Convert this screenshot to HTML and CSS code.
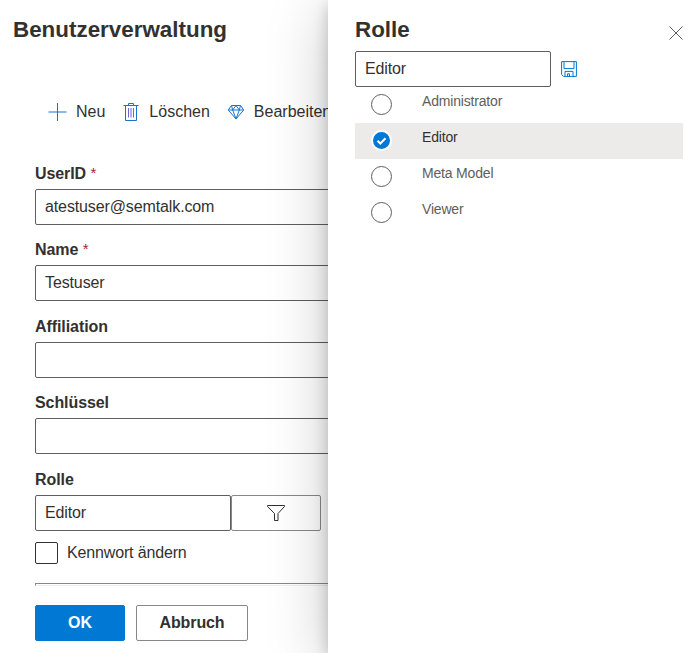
FILE: index.html
```html
<!DOCTYPE html>
<html lang="de">
<head>
<meta charset="utf-8">
<title>Benutzerverwaltung</title>
<link rel="stylesheet" href="styles.css">
</head>
<body>
<div class="app">
  <main class="page">
    <h1 class="title">Benutzerverwaltung</h1>
    <div class="toolbar">
      <button class="command"><svg width="20" height="20" viewBox="0 0 20 20"><path d="M10.500 1v18M1.500 10h18"/></svg><span>Neu</span></button>
      <button class="command"><svg width="20" height="20" viewBox="0 0 20 20"><path d="M2.500 3.500h15M4.500 3.500v15h11v-15M7.500 3.500v-2h5v2"/><path class="slats" d="M7.500 6v9.500M10 6v9.500M12.500 6v9.500"/></svg><span>Löschen</span></button>
      <button class="command"><svg class="gem" width="20" height="20" viewBox="0 0 20 20"><path d="M5.500 3.500h9L17.700 8l-7.700 9L2.300 8zM2.300 8h15.400M10 3.500 6.700 8l3.300 9L13.300 8zM5.500 3.500 6.700 8M14.500 3.500 13.300 8"/></svg><span>Bearbeiten</span></button>
    </div>
    <div class="form">
      <div class="field"><label>UserID <span class="required">*</span></label><div class="input">atestuser@semtalk.com</div></div>
      <div class="field"><label>Name <span class="required">*</span></label><div class="input">Testuser</div></div>
      <div class="field"><label>Affiliation</label><div class="input"></div></div>
      <div class="field"><label>Schlüssel</label><div class="input"></div></div>
      <div class="field">
        <label>Rolle</label>
        <div class="picker">
          <div class="input">Editor</div>
          <button class="filter"><svg width="20" height="20" viewBox="0 0 20 20"><path d="M1.500 2.500h17v1L12 10.500v7H8.500v-7l-7-7z"/></svg></button>
        </div>
      </div>
      <div class="check-row"><span class="checkbox"></span><span>Kennwort ändern</span></div>
      <hr class="divider">
      <div class="actions"><button class="btn primary">OK</button><button class="btn">Abbruch</button></div>
    </div>
  </main>
  <aside class="panel">
    <header class="panel-head">
      <h2 class="title">Rolle</h2>
      <button class="close"><svg width="16" height="16" viewBox="0 0 16 16"><path d="M1.500 1.500l13 13M14.500 1.500l-13 13"/></svg></button>
    </header>
    <div class="search">
      <div class="input">Editor</div>
      <svg class="save" width="16" height="16" viewBox="0 0 16 16"><path d="M.6.6h14.800v14.800H2.500L.6 13.500zM3 .6v7h10v-7M4 15.400v-5h8v5M6.500 15.400v-2.600h2v2.600"/></svg>
    </div>
    <div class="roles">
      <div class="role"><span class="radio"></span><span>Administrator</span></div>
      <div class="role selected"><span class="radio"><svg width="17" height="17" viewBox="0 0 17 17"><path d="M4.500 8.800l2.800 2.700 5.200-5.300"/></svg></span><span>Editor</span></div>
      <div class="role"><span class="radio"></span><span>Meta Model</span></div>
      <div class="role"><span class="radio"></span><span>Viewer</span></div>
    </div>
  </aside>
</div>
</body>
</html>
```
FILE: styles.css
```css
* { box-sizing: border-box; }
body {
  margin: 0;
  background: #fff;
  color: #323130;
  font: 16px/20px "Liberation Sans", Arial, sans-serif;
}
button {
  margin: 0;
  padding: 0;
  border: 0;
  background: none;
  color: inherit;
  font: inherit;
}
svg { display: block; flex: none; fill: none; stroke: currentColor; }
.app {
  display: grid;
  grid-template-columns: 328px 362px;
  height: 653px;
  overflow: hidden;
}
.page { min-width: 0; overflow: hidden; padding-top: 15px; }
.title { margin: 0; font-size: 22.400px; line-height: 30px; font-weight: 700; }
.page > .title { padding-left: 13px; }
.toolbar { display: flex; gap: 17px; margin: 56px 0 0 47px; width: 400px; letter-spacing: -.1px; }
.command { display: flex; align-items: center; gap: 8px; height: 22px; }
.command:first-child { gap: 9px; margin-right: -1px; }
.command svg { color: #1a73d0; }
.command .gem { margin-left: -1px; }
.command .slats { stroke: #6c64cf; }
.form { width: 460px; margin: 41px 0 0 35px; }
.field { height: 76.400px; }
.field label { display: block; height: 25px; font-weight: 700; letter-spacing: -.08px; }
.required { color: #a4262c; font-size: 15px; font-weight: 400; line-height: 1; vertical-align: 1px; }
.input {
  height: 36px;
  padding: 7px 9px;
  border: 1px solid #605e5c;
  border-radius: 2px;
  letter-spacing: -.12px;
}
.picker { display: flex; }
.picker .input, .search .input { width: 196px; }
.filter {
  display: flex;
  align-items: center;
  justify-content: center;
  width: 90px;
  height: 36px;
  border: 1px solid #8a8886;
  border-radius: 2px;
}
.check-row { display: flex; align-items: center; gap: 9px; height: 23px; margin-top: -4.400px; letter-spacing: -.15px; }
.checkbox { width: 23px; height: 22px; border: 1px solid #323130; border-radius: 2px; }
.divider { margin: 18px 0 0; height: 3px; border: 1px solid #eee; border-top-color: #8a8886; border-left-color: #8a8886; }
.actions { display: flex; gap: 11px; margin-top: 19px; }
.btn { width: 112px; height: 36px; border: 1px solid #8a8886; border-radius: 2px; font-weight: 700; letter-spacing: -.1px; }
.primary { width: 90px; border-color: #0078d4; background: #0078d4; color: #fff; }
.panel {
  padding: 15px 7px 0 27px;
  background: #fff;
  box-shadow: 0 10px 57.600px rgba(0, 0, 0, .22), 0 4.800px 14.400px rgba(0, 0, 0, .2);
  z-index: 1;
}
.panel-head { display: flex; justify-content: space-between; height: 36px; }
.close { height: 16px; margin: 10px -1px 0 0; color: #605e5c; }
.search { display: flex; align-items: center; gap: 10px; }
.save { color: #0078d4; }
.role {
  display: flex;
  gap: 30px;
  height: 36px;
  padding: 4px 0 0 16px;
  color: #605e5c;
  font-size: 14px;
  letter-spacing: -.18px;
}
.radio { width: 21px; height: 21px; margin-top: 3.400px; border: 1px solid #605e5c; border-radius: 50%; }
.selected { background: #edebe9; color: #323130; }
.selected .radio { border: 2px solid #fff; background: #0078d4; color: #fff; }
.selected svg { stroke-width: 2; }
```
